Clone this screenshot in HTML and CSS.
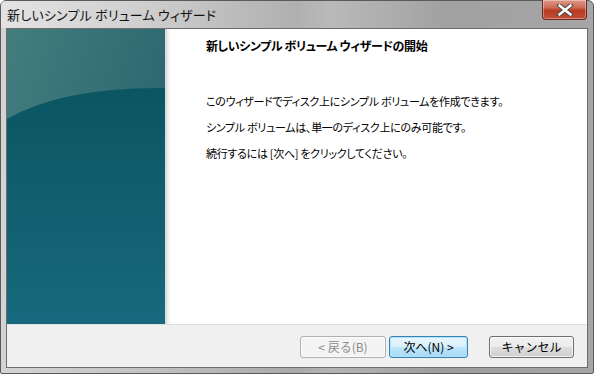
FILE: index.html
```html
<!DOCTYPE html>
<html lang="ja">
<head>
  <meta charset="UTF-8" />
  <title>新しいシンプル ボリューム ウィザード</title>
  <link rel="stylesheet" href="styles.css">
</head>
<body>

  <div class="window">
    <div class="titlebar">
      <span class="title">新しいシンプル ボリューム ウィザード</span>
      <button class="close" aria-label="閉じる">
        <svg width="16" height="12" viewBox="0 0 16 12">
          <path d="M2 1 L14 11 M14 1 L2 11" stroke="#4a4a4a" stroke-width="4.4" stroke-linecap="square"/>
          <path d="M2.5 1.5 L13.5 10.5 M13.5 1.5 L2.5 10.5" stroke="#fff" stroke-width="2.4" stroke-linecap="square"/>
        </svg>
      </button>
    </div>

    <div class="client">
      <div class="main">
        <div class="banner">
          <svg width="158" height="295" viewBox="0 0 158 295" preserveAspectRatio="none">
            <defs>
              <linearGradient id="top" x1="0" y1="0" x2="1" y2="0.6">
                <stop offset="0" stop-color="#437d7e"/>
                <stop offset="1" stop-color="#28646e"/>
              </linearGradient>
              <linearGradient id="low" x1="0" y1="0" x2="0" y2="1">
                <stop offset="0" stop-color="#0b5562"/>
                <stop offset="1" stop-color="#17697d"/>
              </linearGradient>
            </defs>
            <rect width="158" height="295" fill="url(#top)"/>
            <path d="M0 90 Q55 58 158 59 L158 295 L0 295 Z" fill="url(#low)"/>
          </svg>
        </div>
        <div class="shade"></div>
        <div class="content">
          <h1>新しいシンプル ボリューム ウィザードの開始</h1>
          <p class="first">このウィザードでディスク上にシンプル ボリュームを作成できます。</p>
          <p>シンプル ボリュームは、単一のディスク上にのみ可能です。</p>
          <p>続行するには [次へ] をクリックしてください。</p>
        </div>
      </div>

      <div class="footer">
        <button class="btn" disabled>&lt; 戻る(B)</button>
        <button class="btn default">次へ(N) &gt;</button>
        <button class="btn cancel">キャンセル</button>
      </div>
    </div>
  </div>

</body>
</html>
```

FILE: styles.css
```css
* {
  box-sizing: border-box;
}

body {
  margin: 0;
  width: 594px;
  height: 374px;
  background: #fff;
  font-family: "Noto Sans CJK JP", "Noto Sans", sans-serif;
  font-feature-settings: "palt";
  overflow: hidden;
}

.window {
  width: 594px;
  height: 374px;
  display: flex;
  flex-direction: column;
  border: 1px solid #5a5a5a;
  border-radius: 6px 6px 2px 2px;
  background: linear-gradient(90deg, #d4d4d4 0%, #c2c2c2 25%, #a9a9a9 50%, #b4b4b4 56%, #9d9d9d 75%, #a6a6a6 100%);
  padding: 0 5px 7px 5px;
}

.titlebar {
  height: 27px;
  display: flex;
  align-items: flex-start;
  background: linear-gradient(90deg, rgba(255,255,255,0.35) 0%, rgba(255,255,255,0.1) 40%, rgba(255,255,255,0) 100%);
  margin: 0 -5px;
  padding: 0 6px 0 6px;
}

.title {
  font-size: 13px;
  color: #111;
  line-height: 27px;
  letter-spacing: 0.2px;
}

.close {
  margin-left: auto;
  margin-top: -1px;
  width: 45px;
  height: 20px;
  border: 1px solid #6b2a22;
  border-top: none;
  border-radius: 0 0 4px 4px;
  background: linear-gradient(180deg, #dd9a8a 0%, #cc6a55 40%, #b83a22 55%, #c24e33 100%);
  box-shadow: inset 0 0 0 1px rgba(255,255,255,0.35);
  display: flex;
  align-items: center;
  justify-content: center;
  padding: 0;
}

.client {
  flex: 1;
  display: flex;
  flex-direction: column;
  border: 1px solid #6d6d6d;
  background: #fff;
}

.main {
  flex: 1;
  display: flex;
}

.banner {
  width: 158px;
  height: 295px;
}

.banner svg {
  display: block;
}

.shade {
  width: 6px;
  background: linear-gradient(90deg, #d6d6d6, #f6f6f6 70%, #fff);
}

.content {
  flex: 1;
  padding: 9px 0 0 35px;
  color: #000;
}

h1 {
  margin: 0;
  font-size: 12px;
  font-weight: bold;
  line-height: 16px;
  letter-spacing: -0.4px;
}

p {
  margin: 0;
  font-size: 11px;
  line-height: 16px;
  margin-top: 10px;
  letter-spacing: -0.3px;
}

p.first {
  margin-top: 39px;
}

.footer {
  height: 43px;
  background: #f0f0f0;
  border-top: 1px solid #dfdfdf;
  display: flex;
  align-items: center;
  justify-content: flex-end;
  padding: 0 13px 0 0;
}

.btn {
  width: 86px;
  height: 22px;
  font-family: inherit;
  font-size: 12px;
  color: #000;
  border: 1px solid #707070;
  border-radius: 3px;
  background: linear-gradient(180deg, #f2f2f2 0%, #ebebeb 48%, #dddddd 52%, #cfcfcf 100%);
  box-shadow: inset 0 0 0 1px rgba(255,255,255,0.7);
  padding: 0;
  margin-top: 1px;
}

.btn:disabled {
  color: #8d8d8d;
  border-color: #adb2b5;
  background: #f4f4f4;
}

.btn.default {
  width: 79px;
  margin-left: 3px;
  border-color: #3c7fb1;
  background: linear-gradient(180deg, #eaf6fd 0%, #d9f0fc 48%, #bee6fd 52%, #a7d9f5 100%);
  box-shadow: inset 0 0 0 1px #a9e6ff;
}

.btn.cancel {
  width: 85px;
  margin-left: 21px;
}
```
